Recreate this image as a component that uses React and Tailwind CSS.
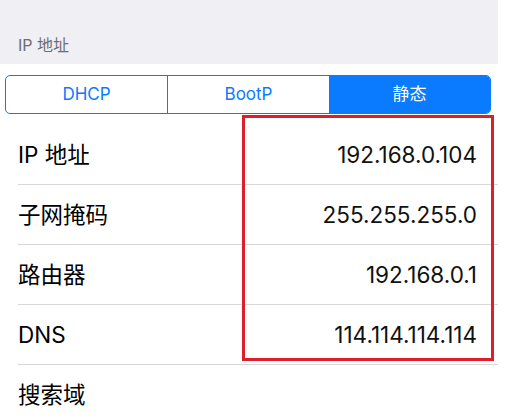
import React from "react";

const rows = [
  ["IP 地址", "192.168.0.104"],
  ["子网掩码", "255.255.255.0"],
  ["路由器", "192.168.0.1"],
  ["DNS", "114.114.114.114"],
  ["搜索域", ""],
];

export default function App() {
  return (
    <div
      className="relative w-[509px] h-[419px] overflow-hidden bg-white"
      style={{ fontFamily: 'Inter, "Noto Sans CJK SC", sans-serif' }}
    >
      <div className="w-[498px]">
        <div className="h-[64px] bg-[#efeff4] flex items-end pb-[7px] pl-[18px] text-[16px] leading-[24px] text-[#6d6d72]">
          IP 地址
        </div>
        <div className="px-[5px] pt-[11px] pr-[7px] pb-[11px]">
          <div className="flex h-[39px] border border-[#0a7aff] rounded-[5px] overflow-hidden text-[17px]">
            <div className="flex-1 flex items-center justify-center text-[#0a7aff] border-r border-[#0a7aff]">DHCP</div>
            <div className="flex-1 flex items-center justify-center text-[#0a7aff]">BootP</div>
            <div className="flex-1 flex items-center justify-center bg-[#0a7aff] text-white">静态</div>
          </div>
        </div>
        <div className="pl-[18px]">
          {rows.map(([k, v], i) => (
            <div
              key={i}
              className={`flex items-center justify-between h-[60px] pr-[21px] ${i < rows.length - 1 ? "border-b border-[#d8d8dc]" : ""}`}
            >
              <span className="text-[22.5px] text-black">{k}</span>
              <span className="text-[22.5px] text-[#111]">{v}</span>
            </div>
          ))}
        </div>
      </div>
      <div className="absolute left-[242px] top-[115px] w-[252px] h-[246px] border-[3px] border-[#dc1e2d]" />
    </div>
  );
}
